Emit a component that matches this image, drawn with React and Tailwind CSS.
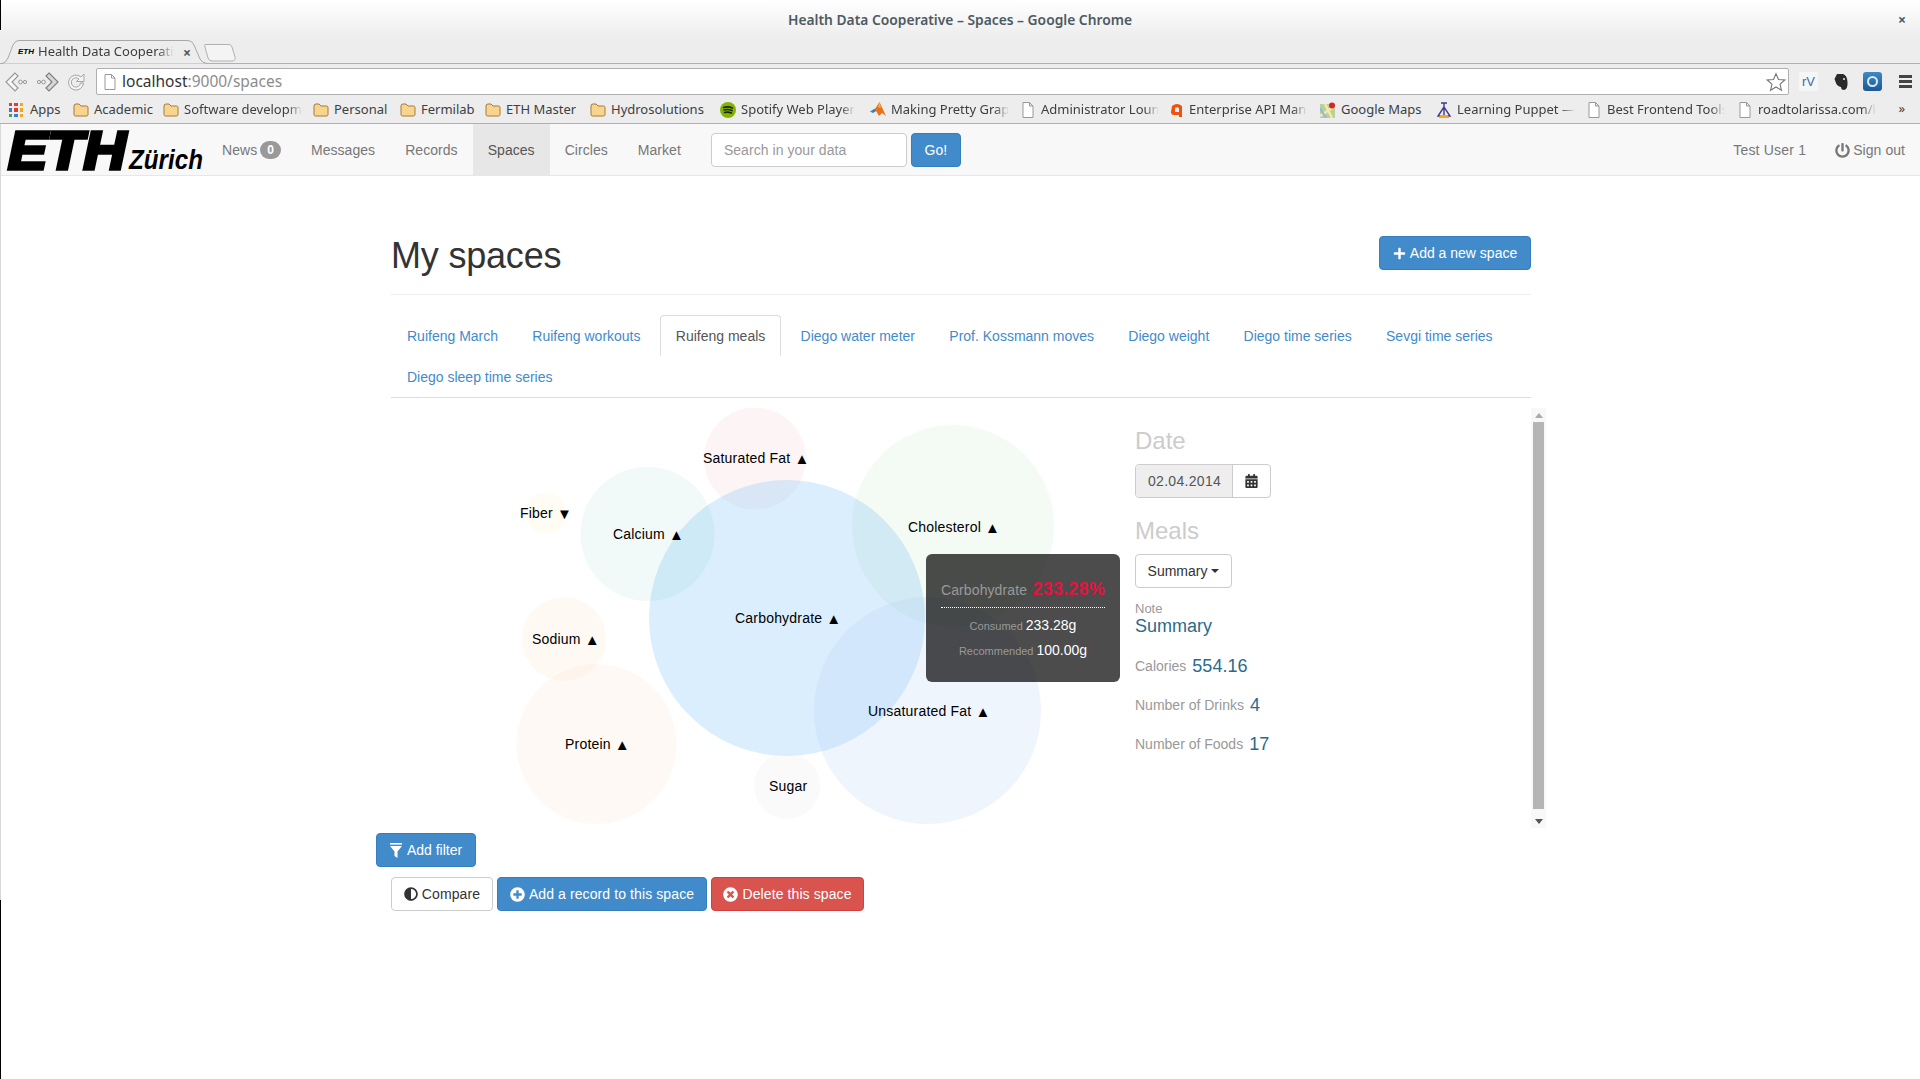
import React from 'react';
import { FaPlus, FaCalendarAlt, FaAdjust, FaPlusCircle, FaTimesCircle, FaPowerOff } from 'react-icons/fa';

const uiFont = "font-['Noto_Sans',sans-serif]";

const Folder = () => (
  <svg width="16" height="14" viewBox="0 0 16 14" className="shrink-0">
    <path d="M1 3 Q1 1 3 1 H6 L8 3 H13.5 Q15 3 15 4.5 V11.5 Q15 13 13.5 13 H2.5 Q1 13 1 11.5 Z" fill="#f8d58f" stroke="#a8793a" />
  </svg>
);

const PageIcon = () => (
  <svg width="12" height="16" viewBox="0 0 12 16" className="shrink-0">
    <path d="M1 .5 H7.5 L11 4 V15.5 H1 Z M7.5 .5 V4 H11" fill="#fff" stroke="#999" />
  </svg>
);

const AppsIcon = () => (
  <div className="grid grid-cols-3 gap-[2px] w-[14px] shrink-0">
    {['#e23c32', '#e23c32', '#f2a81d', '#3c78d8', '#e23c32', '#f2a81d', '#34a853', '#3c78d8', '#f2a81d'].map((c, i) => (
      <span key={i} className="h-[3.3px] w-[3.3px]" style={{ backgroundColor: c }} />
    ))}
  </div>
);

const SpotifyIcon = () => (
  <svg width="16" height="16" viewBox="0 0 16 16" className="shrink-0">
    <circle cx="8" cy="8" r="8" fill="#85b400" />
    <path d="M3.5 5.5 Q8 4 12.5 6 M4 8 Q8 6.8 12 8.6 M4.5 10.5 Q8 9.5 11.5 11" stroke="#1c2a00" strokeWidth="1.6" fill="none" strokeLinecap="round" />
  </svg>
);

const MatlabIcon = () => (
  <svg width="16" height="16" viewBox="0 0 16 16" className="shrink-0">
    <path d="M0 9.5 L5 6.5 L7 8.5 L3 11 Z" fill="#3d7fb0" />
    <path d="M5 7 L9.5 0 L16 14 L12 11 L9 14 Z" fill="#e8701e" />
    <path d="M8 5 L9.5 0 L11 6 Z" fill="#f7b52c" />
  </svg>
);

const ApiIcon = () => (
  <svg width="14" height="16" viewBox="0 0 14 16" className="shrink-0">
    <path d="M2 4 Q7 0 12 4 V15 H9 V6 Q7 4.5 5 6 V10 H9 V13 H4 Q1 13 1 10 Z" fill="#f1510f" />
  </svg>
);

const MapsIcon = () => (
  <svg width="16" height="16" viewBox="0 0 16 16" className="shrink-0">
    <rect y="2" width="15" height="14" fill="#b7d19b" />
    <path d="M0 14 L15 4 M5 2 L12 16" stroke="#f4e9a8" strokeWidth="2.5" />
    <path d="M0 6 L6 16" stroke="#8fb8e8" strokeWidth="2" />
    <circle cx="12" cy="3.5" r="3" fill="#d9252a" />
  </svg>
);

const PuppetIcon = () => (
  <svg width="16" height="16" viewBox="0 0 16 16" className="shrink-0">
    <path d="M5 1 H11 M8 1 V5 M8 5 L2 14 H14 Z M8 5 V14" stroke="#3f3a8c" strokeWidth="1.4" fill="none" />
    <path d="M4 13 H12 L13 16 H3 Z" fill="#f5a623" />
  </svg>
);

const bookmarks = [
  { label: 'Apps', width: 'w-[64px]', icon: <AppsIcon />, gap: 'gap-[7px]' },
  { label: 'Academic', width: 'w-[90px]', icon: <Folder /> },
  { label: 'Software development', width: 'w-[150px]', icon: <Folder />, fade: true },
  { label: 'Personal', width: 'w-[87px]', icon: <Folder /> },
  { label: 'Fermilab', width: 'w-[85px]', icon: <Folder /> },
  { label: 'ETH Master', width: 'w-[105px]', icon: <Folder /> },
  { label: 'Hydrosolutions', width: 'w-[130px]', icon: <Folder /> },
  { label: 'Spotify Web Player', width: 'w-[150px]', icon: <SpotifyIcon />, fade: true },
  { label: 'Making Pretty Graphs', width: 'w-[152px]', icon: <MatlabIcon />, fade: true },
  { label: 'Administrator Lounge', width: 'w-[148px]', icon: <PageIcon />, gap: 'gap-[7px]', fade: true },
  { label: 'Enterprise API Management', width: 'w-[150px]', icon: <ApiIcon />, fade: true },
  { label: 'Google Maps', width: 'w-[116px]', icon: <MapsIcon /> },
  { label: 'Learning Puppet — Docs', width: 'w-[152px]', icon: <PuppetIcon />, fade: true },
  { label: 'Best Frontend Tools', width: 'w-[151px]', icon: <PageIcon />, gap: 'gap-[7px]', fade: true },
  { label: 'roadtolarissa.com/blog', width: 'w-[150px]', icon: <PageIcon />, gap: 'gap-[7px]', fade: true },
];

const navLinks = ['Messages', 'Records', 'Spaces', 'Circles', 'Market'];

const spaceTabs = [
  'Ruifeng March',
  'Ruifeng workouts',
  'Ruifeng meals',
  'Diego water meter',
  'Prof. Kossmann moves',
  'Diego weight',
  'Diego time series',
  'Sevgi time series',
  'Diego sleep time series',
];

// circles in chart coordinates (page position minus chart origin 391,408)
const circles = [
  { cx: 364, cy: 50.5, r: 51, fill: 'rgb(245,205,205)' },
  { cx: 562, cy: 118, r: 101, fill: 'rgb(200,235,200)' },
  { cx: 256.5, cy: 126, r: 67, fill: 'rgb(185,230,220)' },
  { cx: 155, cy: 105, r: 21, fill: 'rgb(255,240,200)' },
  { cx: 173, cy: 231, r: 42, fill: 'rgb(255,225,195)' },
  { cx: 205.5, cy: 336, r: 80, fill: 'rgb(255,225,210)' },
  { cx: 396, cy: 210, r: 138, fill: 'rgb(74,168,245)' },
  { cx: 536.5, cy: 302.5, r: 113.5, fill: 'rgb(175,205,245)' },
  { cx: 396, cy: 378, r: 33, fill: 'rgb(230,230,230)' },
];

const labels = [
  { text: 'Saturated Fat', arrow: '▲', x: 312, y: 50 },
  { text: 'Fiber', arrow: '▼', x: 129, y: 105 },
  { text: 'Calcium', arrow: '▲', x: 222, y: 126 },
  { text: 'Cholesterol', arrow: '▲', x: 517, y: 119 },
  { text: 'Carbohydrate', arrow: '▲', x: 344, y: 210 },
  { text: 'Sodium', arrow: '▲', x: 141, y: 231 },
  { text: 'Unsaturated Fat', arrow: '▲', x: 477, y: 303 },
  { text: 'Protein', arrow: '▲', x: 174, y: 336 },
  { text: 'Sugar', x: 378, y: 378 },
];

const BrowserChrome = () => (
  <div className={uiFont}>
    <div className="relative h-[64px] border-b border-[#b0b0b0] bg-gradient-to-b from-white to-[#ededed] to-60%">
      <div className="flex justify-center pt-[10px] text-[13.8px] font-semibold leading-5 text-[#4e5a62]">
        Health Data Cooperative – Spaces – Google Chrome
      </div>
      <span className="absolute right-[14px] top-[10px] text-[14px] font-bold leading-5 text-[#4e5a62]">×</span>
      <div className="absolute left-[2px] top-[40px] h-[24px] w-[206px]">
        <svg width="206" height="24" viewBox="0 0 206 24" className="absolute inset-0">
          <path d="M0 23.5 Q4 23 6 18 L11 5 Q13 .5 17 .5 H186 Q190 .5 192 5 L198 19 Q200 23 205 23.5" fill="#ededed" stroke="#a8a8a8" />
        </svg>
        <div className="relative flex h-full items-center pl-[16px] text-[13px] text-[#3c4043]">
          <span className="w-[17px] font-['Liberation_Sans'] text-[8px] font-black italic leading-none text-black">ETH</span>
          <span className="ml-[3px] w-[136px] overflow-hidden whitespace-nowrap [mask-image:linear-gradient(to_right,black_88%,transparent)]">
            Health Data Cooperative
          </span>
          <span className="ml-[9px] text-[14px] font-bold text-[#555]">×</span>
        </div>
      </div>
      <svg width="32" height="18" viewBox="0 0 32 18" className="absolute left-[204px] top-[44px]">
        <path d="M1 .5 H25 Q27 .5 28 3 L31 13 Q32 16.5 28 17 H8 Q5 17 4 14 L1 3 Q.5 .5 1 .5 Z" fill="#f4f4f4" stroke="#b0b0b0" />
      </svg>
    </div>

    <div className="flex h-[31px] items-end bg-[#ededed]">
      <div className="flex h-full w-[96px] items-center pl-[5px] pt-[4px]">
        <svg width="22" height="22" viewBox="0 0 22 22" className="shrink-0">
          <path d="M10 2 L1 11 L10 20 L13 17 L7 11 L13 5 Z" fill="#f8f8f8" stroke="#9a9a9a" strokeWidth="1.2" />
          <circle cx="15.5" cy="11" r="1.9" fill="none" stroke="#999" />
          <circle cx="20" cy="11" r="1.6" fill="none" stroke="#999" />
        </svg>
        <svg width="22" height="22" viewBox="0 0 22 22" className="ml-[10px] shrink-0">
          <circle cx="2" cy="11" r="1.6" fill="none" stroke="#999" />
          <circle cx="6.5" cy="11" r="1.9" fill="none" stroke="#999" />
          <path d="M12 2 L21 11 L12 20 L9 17 L15 11 L9 5 Z" fill="#d8d8d8" stroke="#808080" strokeWidth="1.2" />
        </svg>
        <svg width="20" height="20" viewBox="0 0 20 20" className="ml-[7px] shrink-0">
          <path d="M15 5 A7.5 7.5 0 1 0 17.5 11 H14.5 A4.6 4.6 0 1 1 13 7 L10.5 9.5 H18 V2 Z" fill="#f4f4f4" stroke="#a5a5a5" />
        </svg>
      </div>
      <div className="flex h-[27px] w-[1693px] items-center rounded-[2px] border border-[#b0b0b0] bg-white pl-[7px] pr-[2px] text-[15.5px]">
        <PageIcon />
        <span className="ml-[6px] text-[#333]">localhost</span>
        <span className="text-[#8c8c8c]">:9000/spaces</span>
        <svg width="20" height="20" viewBox="0 0 24 24" className="ml-auto">
          <path d="M12 2 L15 9 L22.5 9.6 L16.8 14.5 L18.6 22 L12 18 L5.4 22 L7.2 14.5 L1.5 9.6 L9 9 Z" fill="#fff" stroke="#777" strokeWidth="1.3" />
        </svg>
      </div>
      <div className="flex h-full flex-1 items-center pl-[10px] pt-[4px]">
        <span className="flex h-[19px] w-[19px] items-center justify-center rounded-[2px] bg-[#f4f6f8] font-['Liberation_Sans'] text-[13px] text-[#3a6ea5]">rV</span>
        <svg width="14" height="18" viewBox="0 0 14 18" className="ml-[16px]">
          <path d="M3 1 H9 Q13 2 13.5 9 Q14 16 10 17 Q7 17 7 14 Q3 13 2 10 L0.5 6 Z" fill="#2a2a2a" />
          <circle cx="10" cy="6" r="1" fill="#eee" />
        </svg>
        <span className="ml-[15px] flex h-[19px] w-[19px] items-center justify-center rounded-[3px] bg-gradient-to-b from-[#3d8ac4] to-[#1a5a94]">
          <span className="h-[11px] w-[11px] rounded-full border-2 border-[#dbeafe]" />
        </span>
        <span className="ml-[17px] flex w-[13px] flex-col gap-[2px]">
          <span className="h-[3px] bg-[#444]" />
          <span className="h-[3px] bg-[#444]" />
          <span className="h-[3px] bg-[#444]" />
        </span>
      </div>
    </div>

    <div className="relative flex h-[29px] items-center border-b border-[#b0b0b0] bg-[#ededed] pl-[9px] pt-[2px] text-[13px] text-[#3c4043]">
      {bookmarks.map((b) => (
        <div key={b.label} className={`flex shrink-0 items-center ${b.gap || 'gap-[5px]'} ${b.width}`}>
          {b.icon}
          <span className={`overflow-hidden whitespace-nowrap ${b.fade ? 'max-w-[118px] [mask-image:linear-gradient(to_right,black_88%,transparent)]' : ''}`}>
            {b.label}
          </span>
        </div>
      ))}
      <span className="absolute right-[15px] top-[4px] text-[13px]">»</span>
    </div>
  </div>
);

const NavBar = () => (
  <nav className="flex h-[52px] items-stretch border-b border-[#e7e7e7] bg-[#f8f8f8] text-[14px] tracking-[0.05px] text-[#777]">
    <svg width="207" height="51" viewBox="0 0 207 51" className="shrink-0">
      <text x="8" y="45" fontFamily="Liberation Sans" fontSize="54" fontWeight="700" fontStyle="italic" textLength="118" lengthAdjust="spacingAndGlyphs" stroke="#000" strokeWidth="3.5">ETH</text>
      <text x="129" y="45" fontFamily="Liberation Sans" fontSize="28" fontWeight="700" fontStyle="italic" textLength="74" lengthAdjust="spacingAndGlyphs">Zürich</text>
    </svg>
    <a className="flex items-center px-[15px] pt-px">
      News
      <span className="ml-[3px] rounded-[10px] bg-[#999] px-[7px] py-[3px] text-[12px] font-bold leading-none text-white">0</span>
    </a>
    {navLinks.map((link) => (
      <a key={link} className={`flex items-center px-[15px] pt-px ${link === 'Spaces' ? 'bg-[#e7e7e7] text-[#555]' : ''}`}>
        {link}
      </a>
    ))}
    <div className="ml-[15px] flex items-center gap-[4px] pt-px">
      <div className="flex h-[34px] w-[196px] items-center rounded-[4px] border border-[#ccc] bg-white px-[12px] text-[#999]">
        Search in your data
      </div>
      <button className="h-[34px] w-[50px] rounded-[4px] border border-[#357ebd] bg-[#428bca] text-white">Go!</button>
    </div>
    <div className="ml-auto flex items-center pr-[15px] pt-px">
      <span className="tracking-[0.2px]">Test User 1</span>
      <span className="ml-[29px] flex items-center gap-[3px]">
        <FaPowerOff className="h-[15px] w-[15px]" />
        Sign out
      </span>
    </div>
  </nav>
);

const Tooltip = () => (
  <div className="absolute left-[535px] top-[146px] flex h-[128px] w-[194px] flex-col items-center rounded-[6px] bg-black/70 pt-[24px] text-[#999]">
    <div className="flex w-[164px] items-baseline justify-between whitespace-nowrap border-b border-dotted border-white pb-[6px] text-[14px] tracking-[0.1px]">
      <span>Carbohydrate</span>
      <span className="text-[18px] font-bold leading-[22px] tracking-[0.2px] text-[#e8103f]">233.28%</span>
    </div>
    <div className="mt-[7px] flex items-baseline gap-[3px] text-[11px] leading-[20px]">
      Consumed <span className="text-[14px] text-white">233.28g</span>
    </div>
    <div className="mt-[4px] flex items-baseline gap-[3px] text-[11px] leading-[20px]">
      Recommended <span className="text-[14px] text-white">100.00g</span>
    </div>
  </div>
);

const Chart = () => (
  <div className="relative h-[420px] w-[744px] shrink-0">
    <svg width="744" height="420" viewBox="0 0 744 420" className="absolute inset-0">
      {circles.map((c, i) => (
        <circle key={i} cx={c.cx} cy={c.cy} r={c.r} fill={c.fill} fillOpacity="0.2" />
      ))}
      {labels.map((l) => (
        <text key={l.text} x={l.x} y={l.y} fontSize="14" letterSpacing="0.2" dominantBaseline="central" fill="#000">
          {l.text}
          {l.arrow && <tspan dx="4" fontSize="15">{l.arrow}</tspan>}
        </text>
      ))}
    </svg>
    <Tooltip />
  </div>
);

const StatRow = ({ label, value }) => (
  <div className="flex h-[39px] items-center gap-[6px] text-[#999]">
    <span className="text-[14px]">{label}</span>
    <span className="-mt-[2px] text-[18px] leading-5 text-[#2a6a8f]">{value}</span>
  </div>
);

const DetailPanel = () => (
  <div className="w-[396px] shrink-0 pt-[20px]">
    <h3 className="text-[24px] leading-[26px] text-[#ccc]">Date</h3>
    <div className="mt-[10px] flex h-[34px] w-[136px] rounded-[4px] border border-[#ccc]">
      <div className="flex w-[97px] items-center rounded-l-[4px] border-r border-[#ccc] bg-[#eee] pl-[12px] tracking-[0.3px] text-[#555]">02.04.2014</div>
      <div className="flex flex-1 items-center justify-center text-[#333]">
        <FaCalendarAlt className="h-[14px] w-[13px]" />
      </div>
    </div>
    <h3 className="mt-[20px] text-[24px] leading-[26px] text-[#ccc]">Meals</h3>
    <button className="mt-[10px] flex h-[34px] w-[97px] items-center justify-center gap-[4px] rounded-[4px] border border-[#ccc] bg-white text-[#333]">
      Summary
      <span className="h-0 w-0 border-x-[4px] border-t-[4px] border-x-transparent border-t-[#333]" />
    </button>
    <div className="mt-[12px] text-[13px] leading-[17px] text-[#999]">Note</div>
    <div className="-mt-px text-[18px] leading-5 text-[#2a6a8f]">Summary</div>
    <div className="mt-[11px]">
      <StatRow label="Calories" value="554.16" />
      <StatRow label="Number of Drinks" value="4" />
      <StatRow label="Number of Foods" value="17" />
    </div>
  </div>
);

const ScrollBar = () => (
  <div className="flex w-[15px] shrink-0 flex-col items-center bg-[#f8f8f8]">
    <span className="mt-[5px] h-0 w-0 border-x-[4px] border-b-[5px] border-x-transparent border-b-[#aaa]" />
    <div className="mt-[4px] h-[387px] w-[11px] bg-[#b5b5b5]" />
    <span className="mt-[10px] h-0 w-0 border-x-[4px] border-t-[5px] border-x-transparent border-t-[#555]" />
  </div>
);

export default function App() {
  return (
    <div className="relative h-[1079px] overflow-hidden bg-white font-['Liberation_Sans',sans-serif] text-[14px] text-[#333]">
      <BrowserChrome />
      <NavBar />
      <main className="ml-[376px] w-[1170px] px-[15px]">
        <div className="flex h-[119px] items-start justify-between border-b border-[#eee]">
          <h1 className="pt-[57px] text-[36px] leading-[46px] tracking-[-0.2px] text-[#333]">My spaces</h1>
          <button className="mt-[60px] flex h-[34px] w-[152px] items-center justify-center gap-[4px] rounded-[4px] border border-[#357ebd] bg-[#428bca] text-[14px] text-white">
            <FaPlus className="h-[13px] w-[13px]" />
            Add a new space
          </button>
        </div>

        <ul className="mt-[20px] flex flex-wrap gap-x-[4.3px] border-b border-[#ddd] pl-px">
          {spaceTabs.map((tab) => (
            <li key={tab}>
              <a
                className={`flex h-[41px] items-center rounded-t-[4px] border pt-[2px] whitespace-nowrap ${
                  tab === 'Ruifeng meals'
                    ? 'border-[#ddd] border-b-white bg-white px-[15px] text-[#555]'
                    : 'border-transparent px-[14px] text-[#428bca]'
                }`}
              >
                {tab}
              </a>
            </li>
          ))}
        </ul>

        <div className="mt-[10px] flex w-[1155px]">
          <Chart />
          <DetailPanel />
          <ScrollBar />
        </div>

        <button className="-ml-[15px] mt-[5px] flex h-[34px] w-[100px] items-center justify-center gap-[5px] rounded-[4px] border border-[#357ebd] bg-[#428bca] text-white">
          <svg width="12" height="15" viewBox="0 0 12 15" fill="#fff">
            <rect width="12" height="1.6" />
            <path d="M0 3 H12 L7.5 8.5 V15 L4.5 13 V8.5 Z" />
          </svg>
          Add filter
        </button>

        <div className="mt-[10px] flex gap-[4px] tracking-[0.1px]">
          <button className="flex h-[34px] w-[102px] items-center justify-center gap-[4px] rounded-[4px] border border-[#ccc] bg-white text-[#333]">
            <FaAdjust className="h-[14px] w-[14px]" />
            Compare
          </button>
          <button className="flex h-[34px] w-[210px] items-center justify-center gap-[4px] rounded-[4px] border border-[#357ebd] bg-[#428bca] text-white">
            <FaPlusCircle className="h-[15px] w-[15px]" />
            Add a record to this space
          </button>
          <button className="flex h-[34px] w-[153px] items-center justify-center gap-[4px] rounded-[4px] border border-[#d43f3a] bg-[#d9534f] text-white">
            <FaTimesCircle className="h-[15px] w-[15px]" />
            Delete this space
          </button>
        </div>
      </main>

      {/* window edge left over from the desktop behind the browser */}
      <div className="absolute left-0 top-0 h-[30px] w-px bg-black" />
      <div className="absolute left-0 top-[124px] h-[776px] w-px bg-[#d8d8d8]" />
      <div className="absolute bottom-0 left-0 top-[900px] w-px bg-black" />
    </div>
  );
}
